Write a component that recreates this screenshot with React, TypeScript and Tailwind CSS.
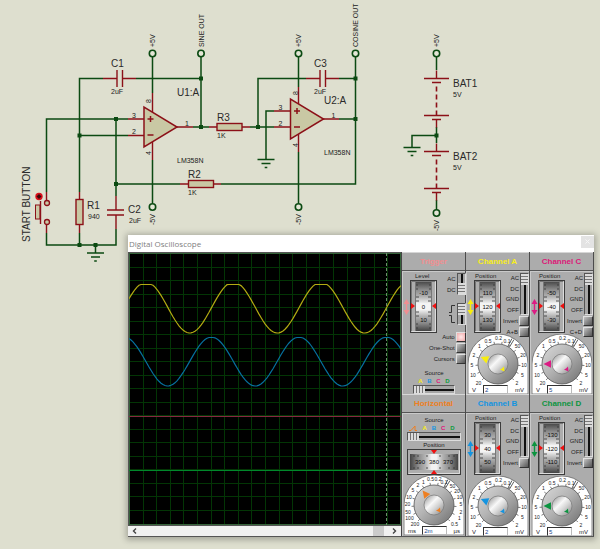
import type { ReactNode } from "react";

const WIRE = "#0b4a12";
const PART = "#8c1018";
const BODY = "#c9c8a4";

function Wire({ d }: { d: string }) {
  return <path d={d} fill="none" stroke={WIRE} strokeWidth="1.5" />;
}

function Lead({ d }: { d: string }) {
  return <path d={d} fill="none" stroke={PART} strokeWidth="1.4" />;
}

function Dot({ x, y }: { x: number; y: number }) {
  return <rect x={x - 2} y={y - 2} width="4" height="4" fill={WIRE} />;
}

function Terminal({ x, y }: { x: number; y: number }) {
  return <circle cx={x} cy={y} r="3.2" fill="#e4e6d6" stroke={WIRE} strokeWidth="1.6" />;
}

function Name({ x, y, children }: { x: number; y: number; children: ReactNode }) {
  return (
    <text x={x} y={y} className="fill-[#2a2a2a] text-[10px]">
      {children}
    </text>
  );
}

function Note({ x, y, up = false, children }: { x: number; y: number; up?: boolean; children: ReactNode }) {
  return (
    <text x={x} y={y} transform={up ? `rotate(-90 ${x} ${y})` : undefined} className="fill-[#222222] text-[7px]">
      {children}
    </text>
  );
}

function Resistor({ x, y, tall = false }: { x: number; y: number; tall?: boolean }) {
  return (
    <rect x={x} y={y} width={tall ? 7 : 25} height={tall ? 25 : 7} fill={BODY} stroke={PART} strokeWidth="1.4" />
  );
}

function Ground({ x, y }: { x: number; y: number }) {
  return (
    <path
      d={`M${x - 8.5} ${y}H${x + 8.5}M${x - 4.5} ${y + 4}H${x + 4.5}M${x - 1.3} ${y + 8}H${x + 1.3}`}
      stroke={WIRE}
      strokeWidth="1.3"
    />
  );
}

function OpAmp({ x, y }: { x: number; y: number }) {
  return (
    <g>
      <path d={`M${x} ${y - 20}V${y + 20}L${x + 33} ${y}Z`} fill={BODY} stroke={PART} strokeWidth="1.5" />
      <path d={`M${x + 3.5} ${y - 8}h6m-3 -3v6M${x + 3.5} ${y + 8}h6`} stroke={PART} strokeWidth="1.5" />
      <Note x={x - 12} y={y - 9}>3</Note>
      <Note x={x - 12} y={y + 7}>2</Note>
      <Note x={x + 41} y={y - 1}>1</Note>
      <Note x={x + 7} y={y - 24} up>8</Note>
      <Note x={x + 7} y={y + 28} up>4</Note>
    </g>
  );
}

function Battery({ x, y }: { x: number; y: number }) {
  return (
    <g>
      <Lead d={`M${x} ${y - 8}V${y}M${x} ${y + 41}V${y + 49}`} />
      <Lead d={`M${x - 12.5} ${y}h25M${x - 4.5} ${y + 4}h9M${x - 12.5} ${y + 37}h25M${x - 4.5} ${y + 41}h9`} />
      <path d={`M${x} ${y + 8}V${y + 37}`} stroke={PART} strokeWidth="1.6" strokeDasharray="5 3" />
    </g>
  );
}

function Schematic() {
  return (
    <svg width="600" height="270" className="block max-w-none" role="img" aria-label="Sine and cosine oscillator schematic">
      <Wire d="M79.5 192V78.5H103M136 78.5H201M46.5 192V119H128M79.5 135.5H128M116 119V196" />
      <Wire d="M152.5 57V93M193 127H209M201 57V127M152.5 160V203" />
      <Wire d="M46.5 233V245H116V229M79.5 233V245M95.5 245V253M116 184H180M221 184H355.5V57" />
      <Wire d="M250 127H274M258 127V78.5H306M339 78.5H355.5M298.5 57V87M298.5 152V203" />
      <Wire d="M274 111H266V159.5M339 119H355.5" />
      <Wire d="M436.5 57V70M436.5 127V143M436.5 135.5H412V147.5M436.5 200V210" />
      <Lead d="M103 78.5H117M123 78.5H136M117 70V87M122.5 70V87" />
      <Lead d="M128 119H144M128 135.5H144M177 127H193M152.5 93V112M152.5 142V160" />
      <Lead d="M79.5 192V200M79.5 225V233M46.5 192V200M46.5 225V233" />
      <Lead d="M116 196V210M116 215V229M107 210H124M107 215H124" />
      <Lead d="M180 184H188M213 184H221M209 127H217M242 127H250" />
      <Lead d="M306 78.5H320M326 78.5H339M320 70V87M325.5 70V87" />
      <Lead d="M274 111H290M274 127H290M323 119H339M298.5 87V104M298.5 134V152" />
      <Resistor x={76} y={199.5} tall />
      <Resistor x={188.5} y={180.5} />
      <Resistor x={217} y={123.5} />
      <OpAmp x={144} y={127} />
      <OpAmp x={290.5} y={119} />
      <Battery x={436.5} y={78.5} />
      <Battery x={436.5} y={151.5} />
      <Ground x={95.5} y={253} />
      <Ground x={266} y={159.5} />
      <Ground x={412} y={147.5} />
      <Dot x={201} y={78.5} />
      <Dot x={201} y={127} />
      <Dot x={79.5} y={135.5} />
      <Dot x={116} y={119} />
      <Dot x={116} y={184} />
      <Dot x={79.5} y={245} />
      <Dot x={95.5} y={245} />
      <Dot x={258} y={127} />
      <Dot x={355.5} y={78.5} />
      <Dot x={355.5} y={119} />
      <Dot x={436.5} y={135.5} />
      <Terminal x={152.5} y={53.5} />
      <Terminal x={201} y={53.5} />
      <Terminal x={298.5} y={53.5} />
      <Terminal x={355.5} y={53.5} />
      <Terminal x={436.5} y={53.5} />
      <Terminal x={152.5} y={207} />
      <Terminal x={298.5} y={207} />
      <Terminal x={436.5} y={213} />
      <rect x="35.5" y="205" width="4.5" height="14" fill={BODY} stroke={PART} />
      <Lead d="M40.5 201V224" />
      <circle cx="47" cy="203" r="2.5" fill={BODY} stroke={PART} strokeWidth="1.3" />
      <circle cx="47" cy="222" r="2.5" fill={BODY} stroke={PART} strokeWidth="1.3" />
      <circle cx="39" cy="196.5" r="3.7" fill="#d8101c" />
      <path d="M39 194l2.5 2.5-2.5 2.5-2.5-2.5z" fill="#3a0508" />
      <Name x={111} y={67}>C1</Name>
      <Note x={111} y={94}>2uF</Note>
      <Name x={177} y={96}>U1:A</Name>
      <Note x={177} y={163}>LM358N</Note>
      <Name x={87} y={209}>R1</Name>
      <Note x={88} y={219}>940</Note>
      <Name x={128} y={213}>C2</Name>
      <Note x={129} y={223}>2uF</Note>
      <Name x={188} y={178}>R2</Name>
      <Note x={188} y={195}>1K</Note>
      <Name x={217} y={121}>R3</Name>
      <Note x={217} y={138}>1K</Note>
      <Name x={314} y={67}>C3</Name>
      <Note x={314} y={94}>2uF</Note>
      <Name x={324} y={104}>U2:A</Name>
      <Note x={324} y={155}>LM358N</Note>
      <Name x={453} y={87}>BAT1</Name>
      <Note x={453} y={97}>5V</Note>
      <Name x={453} y={160}>BAT2</Name>
      <Note x={453} y={170}>5V</Note>
      <Note x={155} y={47} up>+5V</Note>
      <Note x={204} y={47} up>SINE OUT</Note>
      <Note x={301} y={47} up>+5V</Note>
      <Note x={358} y={47} up>COSINE OUT</Note>
      <Note x={439} y={47} up>+5V</Note>
      <Note x={155} y={225} up>-5V</Note>
      <Note x={301} y={225} up>-5V</Note>
      <Note x={439} y={231} up>-5V</Note>
      <text x="30" y="242" transform="rotate(-90 30 242)" className="fill-[#2a2a2a] text-[10px]">
        START BUTTON
      </text>
    </svg>
  );
}

function wave(mid: number, amp: number, peak: number, clip: number) {
  const pts: string[] = [];
  for (let x = 0; x <= 272; x += 2) {
    const y = mid - amp * Math.cos(((x - peak) / 87.5) * 2 * Math.PI);
    pts.push(`${x},${Math.max(y, clip).toFixed(1)}`);
  }
  return pts.join(" ");
}

function Plot() {
  const lines = Array.from({ length: 19 }, (_, i) => i + 1);
  return (
    <svg
      viewBox="0 0 272 272"
      preserveAspectRatio="none"
      className="block h-[272px] w-full bg-black"
      role="img"
      aria-label="Oscilloscope traces"
    >
      {lines.map((i) => (
        <path
          key={i}
          d={`M${Math.round(i * 13.6) + 0.5} 0V272M0 ${Math.round(i * 13.5) + 0.5}H272`}
          stroke="#033505"
          strokeWidth="1"
        />
      ))}
      <rect x="0.5" y="0.5" width="271" height="271" fill="none" stroke="#35633a" />
      <path d="M257.5 0V272" stroke="#6d8a6d" strokeDasharray="3 2" />
      <path d="M0 163.5H272" stroke="#86293f" />
      <path d="M0 217.5H272" stroke="#00882b" />
      <polyline points={wave(54.5, 25.5, 17, 31.5)} fill="none" stroke="#b3ab12" strokeWidth="1.2" />
      <polyline points={wave(108.5, 24.5, 82.5, 84.5)} fill="none" stroke="#06719f" strokeWidth="1.2" />
    </svg>
  );
}

function ScrollBar() {
  return (
    <div className="flex h-[11px] items-center justify-between border-t border-[#555] bg-[#f1f1f1] px-1">
      <button type="button" aria-label="Scroll left" className="flex items-center">
        <svg width="5" height="6" viewBox="0 0 5 6">
          <path d="M4 0.5L1.5 3L4 5.5" fill="none" stroke="#444" strokeWidth="1.4" />
        </svg>
      </button>
      <div className="flex h-full flex-1 justify-end pr-2">
        <div className="h-full w-[11px] bg-[#cbcbcb]" />
      </div>
      <button type="button" aria-label="Scroll right" className="flex items-center">
        <svg width="5" height="6" viewBox="0 0 5 6">
          <path d="M1 0.5L3.5 3L1 5.5" fill="none" stroke="#444" strokeWidth="1.4" />
        </svg>
      </button>
    </div>
  );
}

function Panel({ title, tone, children }: { title: string; tone: string; children: ReactNode }) {
  return (
    <section className="flex flex-col border-r border-[#4c4c4c] bg-[#acacac] text-[#1c1c1c]">
      <h2
        className={`flex h-[19px] items-center justify-center border-t border-b border-t-[#d6d6d6] border-b-[#555] text-[8px] leading-[8px] font-bold ${tone}`}
      >
        {title}
      </h2>
      <div className="flex h-[123px] flex-col border-t border-l border-[#c9c9c9]">{children}</div>
    </section>
  );
}

function UpDown({ color }: { color: string }) {
  return (
    <svg width="7" height="16" viewBox="0 0 7 16">
      <path d="M3.5 0L6.5 5H4.2V11H6.5L3.5 16L0.5 11H2.8V5H0.5Z" fill={color} />
    </svg>
  );
}

function Hidden({ label }: { label: string }) {
  return <input type="range" aria-label={label} className="absolute inset-0 m-0 h-full w-full cursor-pointer opacity-0" />;
}

function Wheel({ label, id, values }: { label: string; id: string; values: string[] }) {
  return (
    <div className="relative h-[53px] w-[27px]">
      <svg width="27" height="53" viewBox="0 0 27 53">
        <defs>
          <linearGradient id={id} x1="0" y1="0" x2="0" y2="1">
            <stop offset="0" stopColor="#4b4b4b" />
            <stop offset="0.15" stopColor="#8a8a8a" />
            <stop offset="0.3" stopColor="#b2b2b2" />
            <stop offset="0.44" stopColor="#f4f4f4" />
            <stop offset="0.56" stopColor="#f4f4f4" />
            <stop offset="0.7" stopColor="#b2b2b2" />
            <stop offset="0.85" stopColor="#868686" />
            <stop offset="1" stopColor="#444" />
          </linearGradient>
        </defs>
        <rect x="0.5" y="0.5" width="26" height="52" fill="#adadad" stroke="#3c3c3c" />
        <path d="M1.5 51.5H25.5V1.5" fill="none" stroke="#dcdcdc" />
        <path d="M1.5 51V1.5H25" fill="none" stroke="#777" />
        <rect x="5" y="2" width="17" height="49" fill={`url(#${id})`} />
        <path d="M5.5 2V51M21.5 2V51" stroke="#777" />
        <path
          d="M6 5H8M19 5H21M6 9H8M19 9H21M6 17H9M18 17H21M6 21H9M18 21H21M6 32H9M18 32H21M6 36H9M18 36H21M6 44H8M19 44H21M6 48H8M19 48H21"
          stroke="#333"
          strokeWidth="0.8"
        />
        {values.map((v, i) => (
          <text key={v} x="13.5" y={15 + i * 13.5} textAnchor="middle" className="fill-[#0a0a0a] text-[6px]">
            {v}
          </text>
        ))}
        <path d="M1 23L5 26L1 29ZM26 23L22 26L26 29Z" fill="#f01010" />
      </svg>
      <Hidden label={label} />
    </div>
  );
}

function VSlider({ label, at = 0 }: { label: string; at?: number }) {
  return (
    <input
      type="range"
      aria-label={label}
      defaultValue={at}
      className="m-0 block h-full w-[9px] appearance-none border border-[#555] border-r-[#ddd] border-b-[#ddd] bg-[linear-gradient(90deg,#a6a6a6_3px,#111_3px,#111_5px,#a6a6a6_5px)] [writing-mode:vertical-lr] [&::-webkit-slider-thumb]:h-[11px] [&::-webkit-slider-thumb]:w-[7px] [&::-webkit-slider-thumb]:appearance-none [&::-webkit-slider-thumb]:bg-[repeating-linear-gradient(180deg,#dcdcdc_0px,#dcdcdc_2px,#777_2px,#777_3px)]"
    />
  );
}

function HSlider({ label }: { label: string }) {
  return (
    <input
      type="range"
      aria-label={label}
      defaultValue={0}
      className="m-0 block h-[9px] w-full appearance-none border border-[#555] border-r-[#ddd] border-b-[#ddd] bg-[linear-gradient(180deg,#a6a6a6_3px,#111_3px,#111_5px,#a6a6a6_5px)] [&::-webkit-slider-thumb]:h-[7px] [&::-webkit-slider-thumb]:w-[11px] [&::-webkit-slider-thumb]:appearance-none [&::-webkit-slider-thumb]:bg-[repeating-linear-gradient(90deg,#dcdcdc_0px,#dcdcdc_2px,#777_2px,#777_3px)]"
    />
  );
}

function PushRow({ label, lit = false }: { label: string; lit?: boolean }) {
  return (
    <button type="button" className="flex h-[11px] items-center justify-end gap-px text-[6px] leading-[6px] whitespace-nowrap">
      {label}
      <span
        className={`h-[10px] w-[10px] border border-[#e0e0e0] border-r-[#333] border-b-[#333] ${
          lit ? "bg-[radial-gradient(#ffe9e9,#f0a8a8)]" : "bg-linear-to-br from-[#c4c4c4] to-[#555]"
        }`}
      />
    </button>
  );
}

type Mark = [string, number, number];

const VOLT_MARKS: Mark[] = [
  ["20", 10.5, 51], ["10", 5, 43], ["5", 4, 32.5], ["2", 6, 23], ["1", 11.5, 14], ["0.5", 20, 8.5],
  ["0.2", 30.5, 5.5], ["0.1", 39, 8.5], ["50", 49.5, 14], ["20", 55, 23], ["10", 56, 32.5], ["5", 54.5, 43], ["2", 49, 50.5],
];

const TIME_MARKS: Mark[] = [
  ["200", 11, 51], ["100", 5.5, 45], ["50", 4, 38.5], ["20", 3.5, 31], ["10", 5, 24], ["5", 9, 17], ["2", 14, 12],
  ["1", 19.5, 8.5], ["0.5", 26.5, 6], ["0.2", 34, 6], ["0.1", 40, 9], ["50", 48.5, 13], ["20", 53, 18],
  ["10", 55.5, 24], ["5", 57, 31], ["2", 57, 38.5], ["1", 55.5, 45], ["0.5", 50.5, 51],
];

function Dial({
  id, label, color, angle, left, right, value, marks = VOLT_MARKS,
}: {
  id: string; label: string; color: string; angle: number; left: string; right: string; value: string; marks?: Mark[];
}) {
  return (
    <div className="relative mx-auto h-[60px] w-[60px]">
      <svg width="60" height="60" viewBox="0 0 60 60">
        <defs>
          <linearGradient id={id} x1="0" y1="0" x2="1" y2="1">
            <stop offset="0" stopColor="#dadada" />
            <stop offset="0.45" stopColor="#b4b4b4" />
            <stop offset="1" stopColor="#6e6e6e" />
          </linearGradient>
          <linearGradient id={`${id}-cap`} x1="0" y1="0" x2="1" y2="1">
            <stop offset="0" stopColor="#8c8c8c" />
            <stop offset="0.4" stopColor="#f8f8f8" />
            <stop offset="0.6" stopColor="#d6d6d6" />
            <stop offset="1" stopColor="#808080" />
          </linearGradient>
        </defs>
        <path d="M0 60V30A30 30 0 0 1 60 30V60Z" fill="#fff" stroke="#555" strokeWidth="0.7" />
        {Array.from({ length: 14 }, (_, i) => {
          const a = ((135 + i * 20.8) * Math.PI) / 180;
          return (
            <path
              key={i}
              d={`M${30 + 20 * Math.cos(a)} ${30 + 20 * Math.sin(a)}L${30 + 22.5 * Math.cos(a)} ${30 + 22.5 * Math.sin(a)}`}
              stroke="#444"
              strokeWidth="0.7"
            />
          );
        })}
        <path d="M40 12L44 4.5M41.5 13L46 5.5" stroke="#333" strokeWidth="0.8" />
        {marks.map(([t, x, y], i) => (
          <text key={i} x={x} y={y} textAnchor="middle" className="fill-[#222] text-[5px]">
            {t}
          </text>
        ))}
        <circle cx="30" cy="30" r="20" fill={`url(#${id})`} stroke="#555" strokeWidth="0.8" />
        <circle cx="30" cy="30" r="10" fill={`url(#${id}-cap)`} stroke="#777" strokeWidth="0.7" />
        <path d="M11.5 30L19 26.2V33.8Z" fill={color} transform={`rotate(${angle} 30 30)`} />
        <path d="M36.5 37.5L32 35.5L34 34.5L36 32.5Z" fill={color} />
      </svg>
      <Hidden label={label} />
      <div className="absolute inset-x-0 bottom-0 flex h-[9px] items-center justify-between px-1 text-[6px] leading-[6px] text-[#222]">
        <span>{left}</span>
        <input
          type="text"
          defaultValue={value}
          aria-label={`${label} value`}
          className="h-[9px] w-[25px] border border-[#333] border-r-[#bbb] border-b-[#bbb] bg-white pl-px text-[6px] leading-[7px] text-[#1a3f8a]"
        />
        <span>{right}</span>
      </div>
    </div>
  );
}

function Channel({
  name, tone, color, values, combine, angle, value,
}: {
  name: string; tone: string; color: string; values: string[]; combine?: string; angle: number; value: string;
}) {
  return (
    <Panel title={`Channel ${name}`} tone={tone}>
      <div className="flex h-[65px] justify-between">
        <div className="flex flex-col">
          <span className="pl-2 text-[6px] leading-[8px]">Position</span>
          <div className="flex items-center">
            <UpDown color={color} />
            <Wheel label={`Channel ${name} position`} id={`wheel-${name}`} values={values} />
          </div>
        </div>
        <div className="flex flex-1 flex-col items-stretch pt-px">
          <div className="flex h-[42px] justify-end gap-px">
            <div className="flex flex-col justify-around text-right text-[6px] leading-[6px]">
              <span>AC</span>
              <span>DC</span>
              <span>GND</span>
              <span>OFF</span>
            </div>
            <VSlider label={`Channel ${name} coupling`} />
          </div>
          <PushRow label="Invert" />
          {combine && <PushRow label={combine} />}
        </div>
      </div>
      <div className="-mt-[3px]">
        <Dial
          id={`dial-${name}`}
          label={`Channel ${name} volts per division`}
          color={color}
          angle={angle}
          left="V"
          right="mV"
          value={value}
        />
      </div>
    </Panel>
  );
}

function SourceLetters() {
  return (
    <>
      <span className="text-[#f8ee14]">A</span>
      <span className="text-[#1696e0]">B</span>
      <span className="text-[#e0147c]">C</span>
      <span className="text-[#0c9c3c]">D</span>
    </>
  );
}

function Trigger() {
  return (
    <Panel title="Trigger" tone="text-[#f08e90]">
      <div className="flex h-[94px]">
        <div className="flex flex-col">
          <span className="pl-3 text-[6px] leading-[8px]">Level</span>
          <div className="flex items-center">
            <UpDown color="#ee8f92" />
            <Wheel label="Trigger level" id="wheel-level" values={["-10", "0", "10"]} />
          </div>
        </div>
        <div className="-ml-2 flex flex-1 flex-col pt-px">
          <div className="flex h-[22px] justify-end gap-px">
            <div className="flex flex-col justify-around text-right text-[6px] leading-[6px]">
              <span>AC</span>
              <span>DC</span>
            </div>
            <VSlider label="Trigger coupling" at={100} />
          </div>
          <div className="mt-2 mb-[6px] flex h-[22px] items-center justify-end gap-[2px]">
            <svg width="6" height="20" viewBox="0 0 6 20">
              <path d="M0 8.5H2.5V1.5H6M0 11.5H2.5V18.5H6" fill="none" stroke="#333" />
            </svg>
            <VSlider label="Trigger edge" />
          </div>
          <PushRow label="Auto" lit />
          <PushRow label="One-Shot" />
          <PushRow label="Cursors" />
        </div>
      </div>
      <div className="flex flex-col items-stretch px-[10px] pt-[3px] text-[6px] leading-[8px]">
        <span className="text-center">Source</span>
        <div className="flex justify-around px-[3px] font-bold">
          <SourceLetters />
        </div>
        <HSlider label="Trigger source" />
      </div>
    </Panel>
  );
}

function Horizontal() {
  return (
    <Panel title="Horizontal" tone="text-[#ee7f22]">
      <div className="flex flex-col px-1 pt-[2px] text-[6px] leading-[8px]">
        <span className="text-center">Source</span>
        <div className="flex items-center justify-around pr-1 font-bold">
          <svg width="8" height="6" viewBox="0 0 8 6">
            <path d="M0 5.5H2L6 1V5.500H8" fill="none" stroke="#ee7f22" />
          </svg>
          <SourceLetters />
        </div>
        <HSlider label="Horizontal source" />
        <span className="text-center">Position</span>
        <div className="relative h-[26px]">
          <svg viewBox="0 0 54 26" preserveAspectRatio="none" className="block h-[26px] w-full">
            <defs>
              <linearGradient id="wheel-h">
                <stop offset="0" stopColor="#444" />
                <stop offset="0.18" stopColor="#8d8d8d" />
                <stop offset="0.32" stopColor="#b4b4b4" />
                <stop offset="0.45" stopColor="#f2f2f2" />
                <stop offset="0.55" stopColor="#f2f2f2" />
                <stop offset="0.68" stopColor="#b4b4b4" />
                <stop offset="0.82" stopColor="#8d8d8d" />
                <stop offset="1" stopColor="#444" />
              </linearGradient>
            </defs>
            <rect x="0.5" y="0.5" width="53" height="25" fill="#adadad" stroke="#3c3c3c" />
            <path d="M1.5 24.5H52.5V1.5" fill="none" stroke="#dcdcdc" />
            <rect x="3" y="5" width="48" height="16" fill="url(#wheel-h)" />
            <path d="M7 6V8M11 6V8M20 6V8M33 6V8M42 6V8M47 6V8M7 18V20M11 18V20M20 18V20M33 18V20M42 18V20M47 18V20" stroke="#333" strokeWidth="0.8" />
            <text x="13" y="15" textAnchor="middle" className="fill-[#0a0a0a] text-[6px]">390</text>
            <text x="27" y="15" textAnchor="middle" className="fill-[#0a0a0a] text-[6px]">380</text>
            <text x="41" y="15" textAnchor="middle" className="fill-[#0a0a0a] text-[6px]">370</text>
            <path d="M24 1H30L27 5ZM24 25H30L27 21Z" fill="#f01010" />
          </svg>
          <Hidden label="Horizontal position" />
        </div>
      </div>
      <Dial
        id="dial-time"
        label="Time base"
        color="#ee7f22"
        angle={52}
        left="ms"
        right="µs"
        value="2m"
        marks={TIME_MARKS}
      />
    </Panel>
  );
}

export default function App() {
  return (
    <main className="relative min-h-screen w-full overflow-hidden bg-[#dedfcf] font-['Liberation_Sans',Arial,sans-serif]">
      <Schematic />
      <div className="absolute top-[235px] right-[6px] left-[128px] border-b border-[#555] bg-white shadow-[0_1px_6px_2px_rgba(0,0,0,0.25)]">
        <header className="flex h-[17px] items-center justify-between pl-px">
          <h1 className="font-['Open_Sans','Noto_Sans',sans-serif] text-[8px] leading-[12px] text-[#808080]">Digital Oscilloscope</h1>
          <button type="button" aria-label="Close" className="mb-1 flex h-[12px] w-[13px] items-center justify-center bg-[#e3e3e3]">
            <svg width="5" height="5" viewBox="0 0 5 5">
              <path d="M0.5 0.5L4.5 4.5M4.5 0.5L0.5 4.5" stroke="#f6f6f6" />
            </svg>
          </button>
        </header>
        <div className="grid grid-cols-[1fr_64px_64px_64px]">
          <div className="row-span-2 flex flex-col border-r border-[#444]">
            <div className="border-t border-l border-[#555]">
              <Plot />
            </div>
            <ScrollBar />
          </div>
          <Trigger />
          <Channel
            name="A"
            tone="text-[#f8ee1c]"
            color="#f8ee0c"
            values={["110", "120", "130"]}
            combine="A+B"
            angle={22}
            value="2"
          />
          <Channel
            name="C"
            tone="text-[#dc1878]"
            color="#dc1c84"
            values={["-50", "-40", "-30"]}
            combine="C+D"
            angle={0}
            value="5"
          />
          <Horizontal />
          <Channel name="B" tone="text-[#1494e0]" color="#1494e0" values={["30", "40", "50"]} angle={22} value="2" />
          <Channel name="D" tone="text-[#0c9440]" color="#0c9440" values={["-130", "-120", "-110"]} angle={0} value="5" />
        </div>
      </div>
    </main>
  );
}
